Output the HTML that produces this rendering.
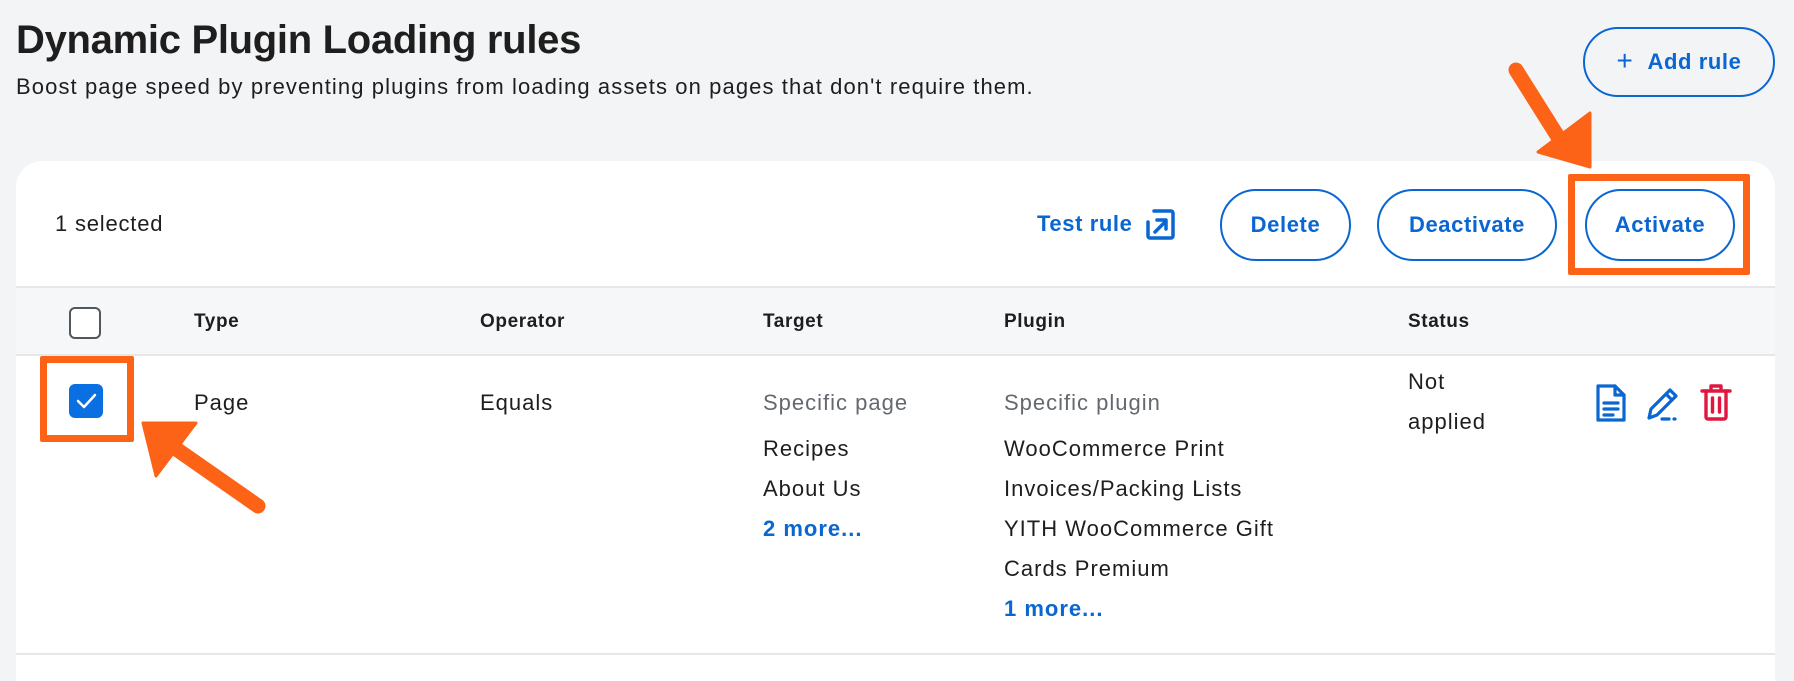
<!DOCTYPE html>
<html><head><meta charset="utf-8"><style>
*{margin:0;padding:0;box-sizing:border-box}
body{width:1794px;height:672px;background:#f3f4f6;font-family:"Liberation Sans",sans-serif;color:#1e1e1e;position:relative;overflow:hidden}
.a{position:absolute;white-space:nowrap}
.btn{position:absolute;border:2.5px solid #0a66d0;border-radius:40px;color:#0a66d0;font-weight:bold;font-size:22px;letter-spacing:0.6px;display:flex;align-items:center;justify-content:center;background:#fff}
.t{font-size:22px;line-height:26px;letter-spacing:1px}
.h{font-size:19px;font-weight:bold;top:311px;letter-spacing:0.6px}
.g{color:#646970}
.b{color:#0a66d0;font-weight:bold}
</style></head><body>
<div class="a" style="left:16px;top:18px;font-size:40px;font-weight:bold;letter-spacing:-0.3px">Dynamic Plugin Loading rules</div>
<div class="a" style="left:16px;top:74px;font-size:22px;letter-spacing:1.1px">Boost page speed by preventing plugins from loading assets on pages that don't require them.</div>
<div class="btn" style="left:1583px;top:27px;width:192px;height:70px;background:transparent"><span style="font-weight:normal;font-size:28px;margin-right:14px;margin-top:-3px">+</span>Add rule</div>

<div class="a" style="left:16px;top:161px;width:1759px;height:520px;background:#fff;border-radius:26px 26px 0 0"></div>
<div class="a t" style="left:55px;top:211px;letter-spacing:0.8px">1 selected</div>
<div class="a b" style="left:1037px;top:211px;font-size:22px;letter-spacing:0.6px">Test rule</div>
<svg class="a" style="left:1144px;top:208px" width="32" height="33" viewBox="0 0 32 33" fill="none" stroke="#0a66d0" stroke-width="3.5" stroke-linecap="round" stroke-linejoin="round"><path d="M10 3H27a2 2 0 0 1 2 2v23a2 2 0 0 1-2 2H6a2 2 0 0 1-2-2V14"/><path d="M11 24L22 13M13 12h9v9"/></svg>
<div class="btn" style="left:1220px;top:189px;width:131px;height:72px">Delete</div>
<div class="btn" style="left:1377px;top:189px;width:180px;height:72px">Deactivate</div>
<div class="btn" style="left:1585px;top:189px;width:150px;height:72px">Activate</div>
<div class="a" style="left:1568px;top:174px;width:182px;height:101px;border:7px solid #fd6317;border-radius:2px"></div>

<div class="a" style="left:16px;top:286px;width:1759px;height:70px;background:#f6f7f9;border-top:2px solid #e6e7ea;border-bottom:2px solid #e6e7ea"></div>
<div class="a" style="left:69px;top:307px;width:32px;height:32px;border:2px solid #50575e;border-radius:6px;background:#fff"></div>
<div class="a h" style="left:194px">Type</div>
<div class="a h" style="left:480px">Operator</div>
<div class="a h" style="left:763px">Target</div>
<div class="a h" style="left:1004px">Plugin</div>
<div class="a h" style="left:1408px">Status</div>

<div class="a" style="left:69px;top:384px;width:34px;height:34px;background:#0a6fe0;border-radius:6px"></div>
<svg class="a" style="left:69px;top:384px" width="34" height="34"><path d="M9 17l6 6 11-12" stroke="#fff" stroke-width="2.5" fill="none" stroke-linecap="round" stroke-linejoin="round"/></svg>
<div class="a" style="left:40px;top:356px;width:94px;height:86px;border:7px solid #fd6317;border-radius:2px"></div>

<div class="a t" style="left:194px;top:390px">Page</div>
<div class="a t" style="left:480px;top:390px">Equals</div>
<div class="a t g" style="left:763px;top:390px">Specific page</div>
<div class="a t" style="left:763px;top:436px">Recipes</div>
<div class="a t" style="left:763px;top:476px">About Us</div>
<div class="a t b" style="left:763px;top:516px">2 more...</div>
<div class="a t g" style="left:1004px;top:390px">Specific plugin</div>
<div class="a t" style="left:1004px;top:436px">WooCommerce Print</div>
<div class="a t" style="left:1004px;top:476px">Invoices/Packing Lists</div>
<div class="a t" style="left:1004px;top:516px">YITH WooCommerce Gift</div>
<div class="a t" style="left:1004px;top:556px">Cards Premium</div>
<div class="a t b" style="left:1004px;top:596px">1 more...</div>
<div class="a t" style="left:1408px;top:369px">Not</div>
<div class="a t" style="left:1408px;top:409px">applied</div>

<svg class="a" style="left:1594px;top:383px" width="34" height="40" viewBox="0 0 34 40" fill="none" stroke="#0a66d0" stroke-width="3.2" stroke-linejoin="round" stroke-linecap="round"><path d="M4 3h17l9 9v25H4z"/><path d="M21 3v9h9"/><path d="M10 20h14M10 26h14M10 32h9"/></svg>
<svg class="a" style="left:1644px;top:383px" width="40" height="40" viewBox="0 0 40 40" fill="none" stroke="#0a66d0" stroke-width="3.2" stroke-linejoin="round" stroke-linecap="round"><path d="M5 35l2-9L26 7l6 6-19 19z"/><path d="M22 11l6 6"/><path d="M18 36h7M30 36h1"/></svg>
<svg class="a" style="left:1699px;top:383px" width="34" height="40" viewBox="0 0 34 40" fill="none" stroke="#e0173f" stroke-width="3.4" stroke-linejoin="round" stroke-linecap="round"><path d="M3 8h28M12 8V3h10v5"/><path d="M7 8v26a2 2 0 0 0 2 2h16a2 2 0 0 0 2-2V8"/><path d="M13.5 15v14M20.5 15v14"/></svg>

<div class="a" style="left:16px;top:653px;width:1759px;height:2px;background:#e6e7ea"></div>

<svg class="a" style="left:0;top:0" width="1794" height="672">
<g fill="#fd6317" stroke="#fd6317" stroke-linecap="round" stroke-linejoin="round">
<path d="M1516 70L1560 140" stroke-width="15" fill="none"/>
<path d="M1590 113L1590 167L1538 152Z" stroke-width="3"/>
<path d="M258 506L172 446" stroke-width="15" fill="none"/>
<path d="M143 423L196 423L156 476Z" stroke-width="3"/>
</g></svg>
</body></html>
